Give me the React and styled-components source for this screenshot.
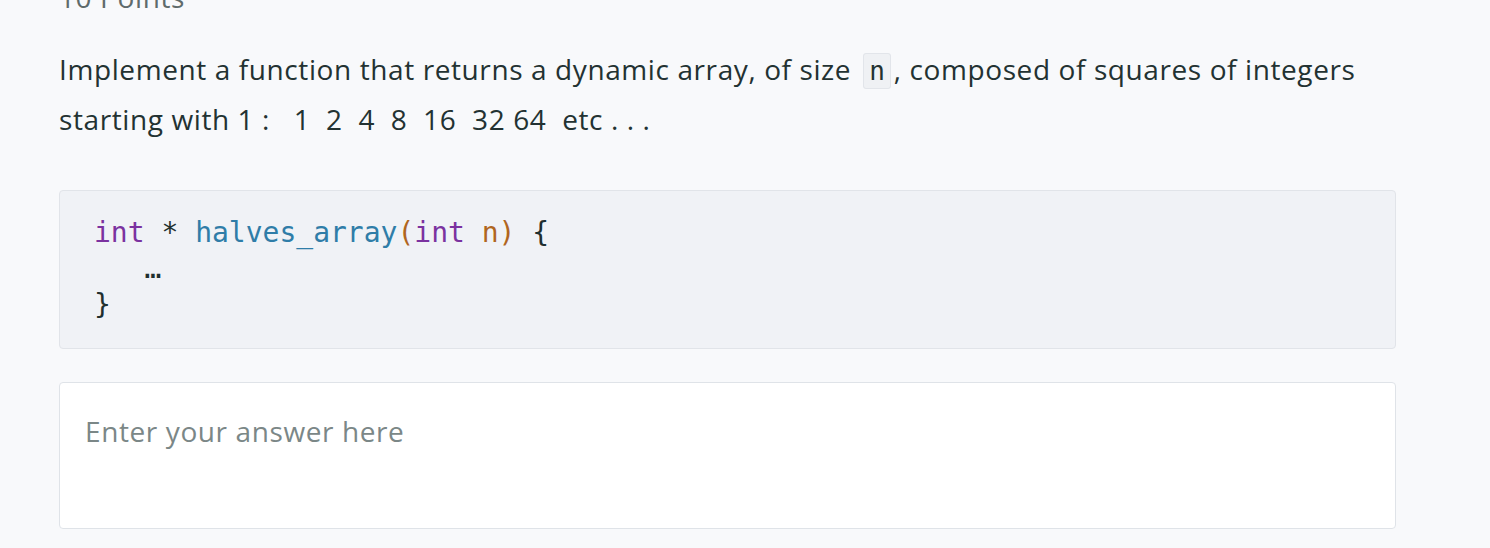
import React from 'react'
import styled, { createGlobalStyle } from 'styled-components'

const GlobalStyle = createGlobalStyle`
  html, body {
    margin: 0;
    padding: 0;
    background: #f8f9fb;
    overflow: hidden;
  }
  * {
    box-sizing: border-box;
  }
`;

const StyledPage = styled.div`
  width: 1490px;
  padding: 1px 94px 0 59px;
  font-family: "Open Sans", Lato, sans-serif;
  color: #233232;
`;

const StyledPoints = styled.h3`
  margin: -21px 0 0;
  font-size: 28px;
  font-weight: 400;
  letter-spacing: 0.6px;
  line-height: 34px;
  color: #5f6b6b;
`;

const StyledQuestion = styled.p`
  margin: 31px 0 0;
  font-size: 28px;
  letter-spacing: 0.6px;
  line-height: 48px;
  white-space: pre-wrap;
`;

const StyledInlineCode = styled.code`
  font-family: "DejaVu Sans Mono", monospace;
  font-size: 26px;
  letter-spacing: 0;
  background: #eff1f4;
  border: 1px solid #e2e5ea;
  border-radius: 3px;
  padding: 2px 5px;
  margin: 0 3px 0 12px;
`;

const StyledCodeBlock = styled.div`
  margin: 47px 0 0;
  padding: 23.5px 34px 25.5px;
  background: #f0f2f6;
  border: 1px solid #e1e4e9;
  border-radius: 4px;
  font-family: "DejaVu Sans Mono", monospace;
  font-size: 28px;
  color: #1f2f2f;
`;

const CodeLine = styled.div`
  height: 36px;
  line-height: 36px;
  white-space: pre;
`;

const Token = styled.span`
  color: ${p => p.$color};
`;

const StyledAnswer = styled.textarea`
  display: block;
  width: 100%;
  height: 147px;
  margin: 33px 0 0;
  padding: 31px 25px;
  background: #ffffff;
  border: 1px solid #dfe3e8;
  border-radius: 4px;
  resize: none;
  outline: none;
  font-family: "Open Sans", Lato, sans-serif;
  font-size: 28px;
  letter-spacing: 0.6px;
  line-height: 34px;
  color: #233232;
  &::placeholder {
    color: #7b8787;
  }
`;

const KEYWORD = '#7b32a0'
const FUNC = '#2f7da8'
const PARAM = '#b0661e'

export default function App() {
  return (
    <>
      <GlobalStyle />
      <StyledPage>
        <StyledPoints>10 Points</StyledPoints>
        <StyledQuestion>
          Implement a function that returns a dynamic array, of size<StyledInlineCode>n</StyledInlineCode>, composed of squares of integers
          <br />
          {'starting with 1 :   1  2  4  8  16  32 64  etc . . .'}
        </StyledQuestion>
        <StyledCodeBlock>
          <CodeLine>
            <Token $color={KEYWORD}>int</Token>{' * '}<Token $color={FUNC}>halves_array</Token>
            <Token $color={PARAM}>(</Token><Token $color={KEYWORD}>int</Token>{' '}<Token $color={PARAM}>n)</Token>{' {'}
          </CodeLine>
          <CodeLine>{'   …'}</CodeLine>
          <CodeLine>{'}'}</CodeLine>
        </StyledCodeBlock>
        <StyledAnswer placeholder="Enter your answer here" />
      </StyledPage>
    </>
  )
}
